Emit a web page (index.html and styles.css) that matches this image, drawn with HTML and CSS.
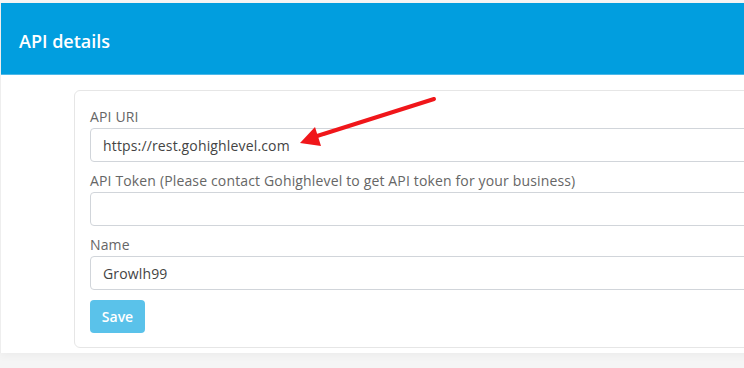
FILE: index.html
```html
<!DOCTYPE html>
<html lang="en">
<head>
    <meta charset="UTF-8">
    <meta name="viewport" content="width=device-width, initial-scale=1.0">
    <title>API details</title>
    <link rel="stylesheet" href="styles.css">
</head>
<body>
    <div class="panel">
        <div class="panel-header">
            <h2>API details</h2>
        </div>

        <div class="panel-body">
            <form class="api-card">
                <div class="form-group">
                    <label for="apiUri">API URI</label>
                    <input type="text" id="apiUri" value="https://rest.gohighlevel.com">
                </div>

                <div class="form-group">
                    <label for="apiToken">API Token (Please contact Gohighlevel to get API token for your business)</label>
                    <input type="text" id="apiToken" value="">
                </div>

                <div class="form-group">
                    <label for="apiName">Name</label>
                    <input type="text" id="apiName" value="Growlh99">
                </div>

                <button type="button" class="btn-save">Save</button>
            </form>
        </div>

        <!-- annotation arrow -->
        <svg class="arrow" width="744" height="368" viewBox="0 0 744 368">
            <line x1="434" y1="99" x2="314" y2="137" stroke="#f0161a" stroke-width="4" stroke-linecap="round"/>
            <polygon points="300,143 315,127 321,146" fill="#f0161a"/>
        </svg>
    </div>
</body>
</html>
```

FILE: styles.css
```css
* {
    box-sizing: border-box;
    margin: 0;
    padding: 0;
}

html, body {
    height: 100%;
}

body {
    font-family: "Open Sans", Lato, sans-serif;
    background-color: #f5f5f5;
    color: #555;
    overflow: hidden;
    padding-top: 3px;
}

.panel {
    position: relative;
    background-color: #fff;
    border-left: 1px solid #eee;
    width: 800px;
    height: 350px;
    box-shadow: 0 3px 8px rgba(0, 0, 0, 0.04);
}

.panel-header {
    background-color: #019edf;
    height: 72px;
    padding: 26px 0 0 18px;
    border-bottom: 1px solid #4db8e8;
}

.panel-header h2 {
    color: #fff;
    font-size: 18px;
    font-weight: 600;
    line-height: 24px;
}

.panel-body {
    padding: 15px 0 0 73px;
}

.api-card {
    width: 700px;
    border: 1px solid #e6e6e6;
    border-radius: 6px;
    padding: 17px 15px 14px 15px;
}

.form-group {
    margin-bottom: 10px;
}

.form-group label {
    display: block;
    font-size: 14px;
    letter-spacing: 0.15px;
    color: #666;
    line-height: 18px;
    margin-bottom: 2px;
}

.form-group input {
    display: block;
    width: 100%;
    height: 34px;
    padding: 0 12px;
    border: 1px solid #d1d5da;
    border-radius: 4px;
    font-family: inherit;
    font-size: 14px;
    letter-spacing: 0.15px;
    color: #444;
}

.btn-save {
    display: block;
    width: 55px;
    height: 33px;
    background-color: #5ac2ea;
    color: #fff;
    border: none;
    border-radius: 4px;
    font-family: inherit;
    font-size: 14px;
    font-weight: 600;
}

.arrow {
    position: absolute;
    left: -1px;
    top: -3px;
    pointer-events: none;
}
```
